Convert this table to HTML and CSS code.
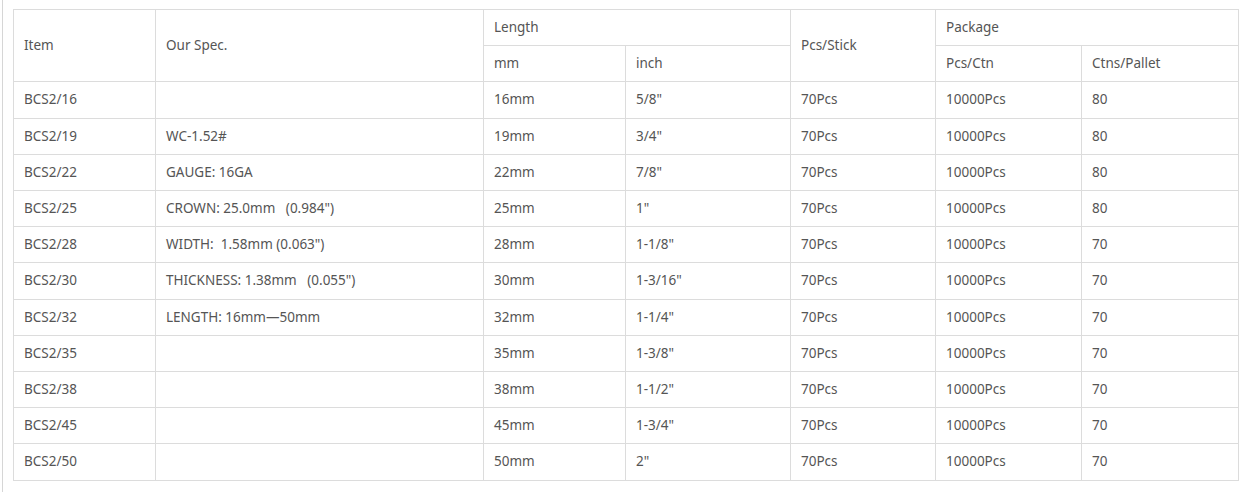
FILE: index.html
```html
<!DOCTYPE html>
<html>
<head>
<meta charset="utf-8">
<link rel="stylesheet" href="styles.css">
</head>
<body>
<div class="wrap">
<table class="spec">
  <colgroup>
    <col class="c1"><col class="c2"><col class="c3"><col class="c4"><col class="c5"><col class="c6"><col class="c7">
  </colgroup>
  <thead>
    <tr>
      <th rowspan="2">Item</th>
      <th rowspan="2">Our Spec.</th>
      <th colspan="2">Length</th>
      <th rowspan="2">Pcs/Stick</th>
      <th colspan="2">Package</th>
    </tr>
    <tr>
      <th>mm</th><th>inch</th><th>Pcs/Ctn</th><th>Ctns/Pallet</th>
    </tr>
  </thead>
  <tbody>
    <tr><td>BCS2/16</td><td></td><td>16mm</td><td>5/8"</td><td>70Pcs</td><td>10000Pcs</td><td>80</td></tr>
    <tr><td>BCS2/19</td><td>WC-1.52#</td><td>19mm</td><td>3/4"</td><td>70Pcs</td><td>10000Pcs</td><td>80</td></tr>
    <tr><td>BCS2/22</td><td>GAUGE: 16GA</td><td>22mm</td><td>7/8"</td><td>70Pcs</td><td>10000Pcs</td><td>80</td></tr>
    <tr><td>BCS2/25</td><td>CROWN: 25.0mm &nbsp; (0.984")</td><td>25mm</td><td>1"</td><td>70Pcs</td><td>10000Pcs</td><td>80</td></tr>
    <tr><td>BCS2/28</td><td>WIDTH: &nbsp;1.58mm (0.063")</td><td>28mm</td><td>1-1/8"</td><td>70Pcs</td><td>10000Pcs</td><td>70</td></tr>
    <tr><td>BCS2/30</td><td>THICKNESS: 1.38mm &nbsp; (0.055")</td><td>30mm</td><td>1-3/16"</td><td>70Pcs</td><td>10000Pcs</td><td>70</td></tr>
    <tr><td>BCS2/32</td><td>LENGTH: 16mm—50mm</td><td>32mm</td><td>1-1/4"</td><td>70Pcs</td><td>10000Pcs</td><td>70</td></tr>
    <tr><td>BCS2/35</td><td></td><td>35mm</td><td>1-3/8"</td><td>70Pcs</td><td>10000Pcs</td><td>70</td></tr>
    <tr><td>BCS2/38</td><td></td><td>38mm</td><td>1-1/2"</td><td>70Pcs</td><td>10000Pcs</td><td>70</td></tr>
    <tr><td>BCS2/45</td><td></td><td>45mm</td><td>1-3/4"</td><td>70Pcs</td><td>10000Pcs</td><td>70</td></tr>
    <tr><td>BCS2/50</td><td></td><td>50mm</td><td>2"</td><td>70Pcs</td><td>10000Pcs</td><td>70</td></tr>
  </tbody>
</table>
</div>
</body>
</html>
```

FILE: styles.css
```css
html, body {
  margin: 0;
  padding: 0;
  background: #fff;
}
body {
  font-family: "Noto Sans", "Open Sans", sans-serif;
  font-size: 13.5px;
  color: #555;
}
.wrap {
  margin-left: 2px;
  border-left: 1px solid #d6d6d6;
  padding: 9px 0 11px 10px;
  width: 1235px;
}
.spec {
  border-collapse: collapse;
  table-layout: fixed;
  width: 1225px;
}
.c1 { width: 142px; }
.c2 { width: 328px; }
.c3 { width: 142px; }
.c4 { width: 165px; }
.c5 { width: 145px; }
.c6 { width: 146px; }
.c7 { width: 157px; }
.spec th, .spec td {
  border: 1px solid #dcdcdc;
  padding: 8px 10px;
  line-height: 19.2px;
  text-align: left;
  font-weight: normal;
  vertical-align: middle;
  white-space: nowrap;
  color: #555;
}
```
